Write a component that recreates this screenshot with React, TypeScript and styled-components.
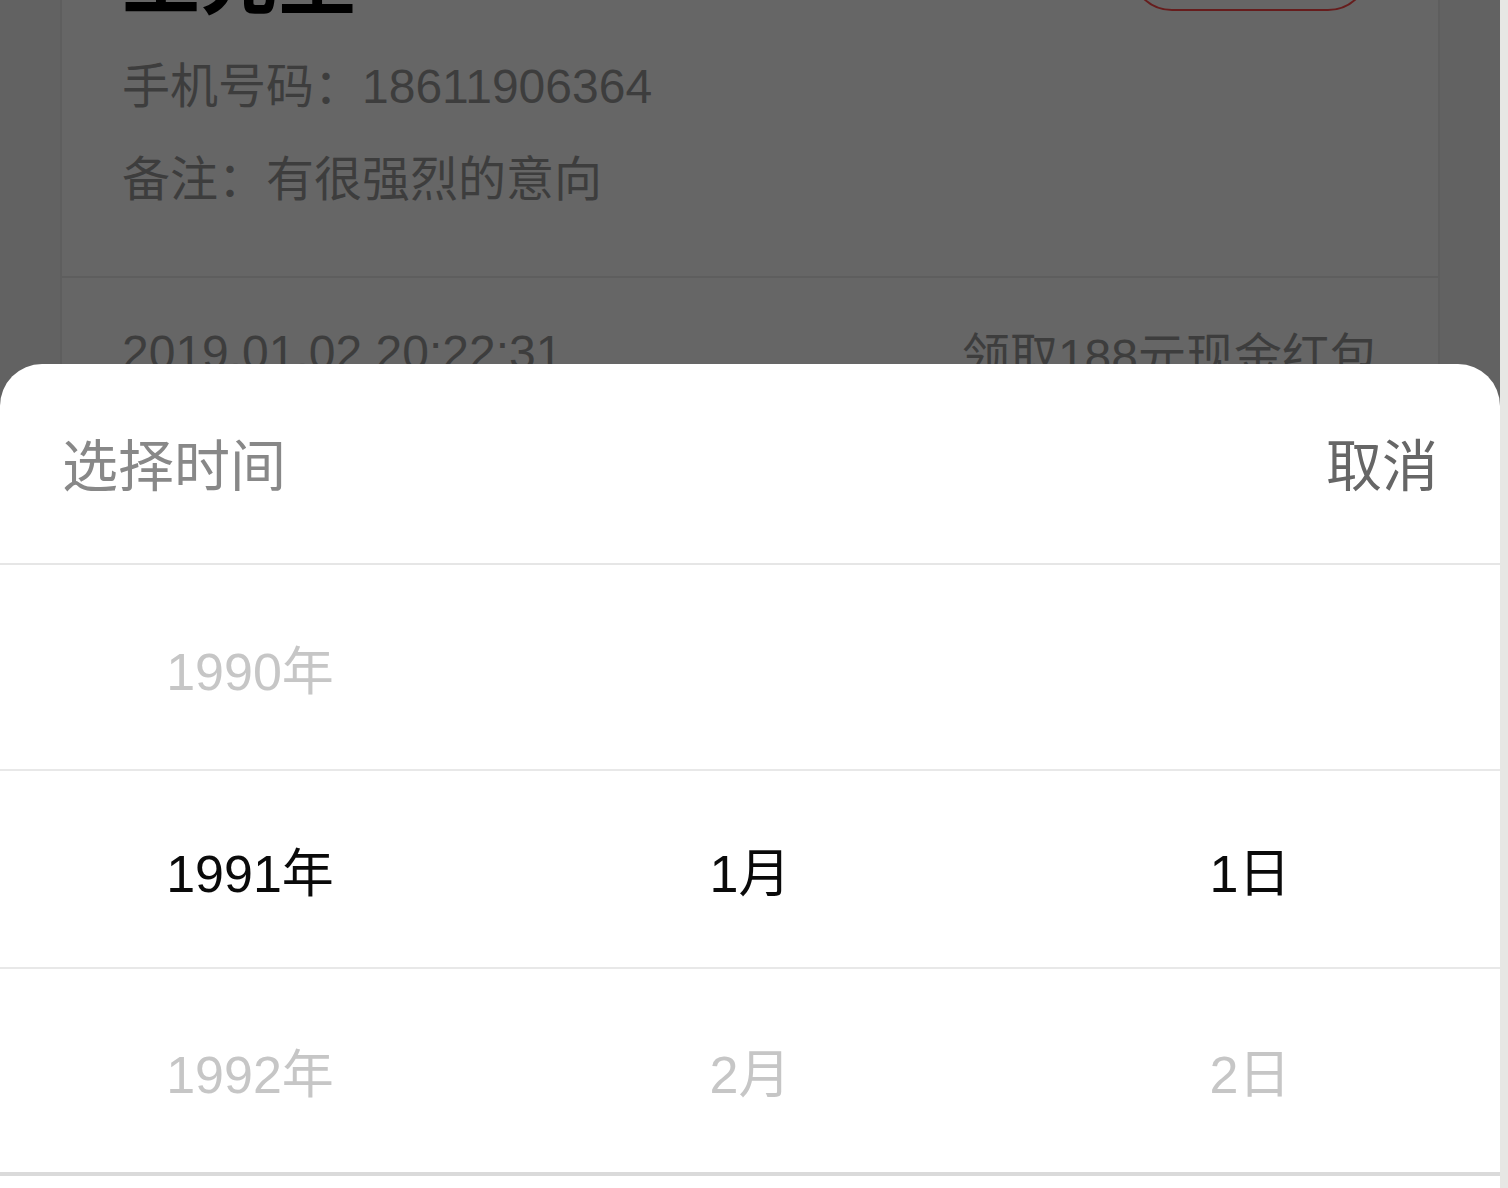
import React from "react";
import styled, { createGlobalStyle } from "styled-components";

const Global = createGlobalStyle`
  html, body {
    margin: 0;
    padding: 0;
    background: #e7e7e4;
    overflow: hidden;
  }
  * { box-sizing: border-box; }
`;

const FONT = `"Liberation Sans", "Noto Sans CJK SC", sans-serif`;

const Screen = styled.div`
  position: relative;
  width: 1500px;
  height: 1188px;
  overflow: hidden;
  background: #f6f6f6;
  font-family: ${FONT};
`;

const Card = styled.section`
  margin: -66px 60px 0;
  background: #ffffff;
  border-left: 2px solid #ececec;
  border-right: 2px solid #ececec;
`;

const CardTop = styled.div`
  padding: 0 60px 50px;
  border-bottom: 2px solid #ebebeb;
`;

const NameRow = styled.div`
  height: 80px;
  display: flex;
  align-items: flex-end;
  justify-content: space-between;
  margin-bottom: 26px;
`;

const Name = styled.h2`
  margin: 0;
  font-size: 78px;
  line-height: 78px;
  font-weight: 700;
  color: #000;
  transform: translateY(6px);
`;

const OutlineButton = styled.button`
  width: 240px;
  height: 84px;
  margin-right: 8px;
  margin-bottom: 3px;
  border: 2px solid #ff4a4a;
  border-radius: 42px;
  background: transparent;
`;

const InfoLine = styled.p`
  margin: 0;
  font-size: 48px;
  line-height: 93px;
  color: #9a9a9a;
`;

const RecordRow = styled.div`
  height: 148px;
  padding: 0 60px;
  display: flex;
  align-items: center;
  justify-content: space-between;
  font-size: 48px;
  color: #9a9a9a;
`;

const Mask = styled.div`
  position: absolute;
  inset: 0;
  background: rgba(0, 0, 0, 0.6);
`;

const Sheet = styled.div`
  position: absolute;
  left: 0;
  right: 0;
  top: 364px;
  bottom: 0;
  background: #ffffff;
  border-radius: 42px 42px 0 0;
  overflow: hidden;
`;

const SheetHeader = styled.header`
  height: 201px;
  padding: 0 62px;
  display: flex;
  align-items: center;
  justify-content: space-between;
  border-bottom: 2px solid #e6e6e6;
`;

const HeaderText = styled.span<{ $tone: string }>`
  font-size: 56px;
  color: ${(p) => p.$tone};
  transform: translateY(-2px);
`;

const PickerRow = styled.div<{ $h: number; $last?: boolean }>`
  height: ${(p) => p.$h}px;
  display: grid;
  grid-template-columns: repeat(3, 1fr);
  align-items: center;
  border-bottom: ${(p) => (p.$last ? "4px solid #dadada" : "2px solid #e8e8e8")};
`;

const Cell = styled.div<{ $active: boolean }>`
  text-align: center;
  font-size: 52px;
  color: ${(p) => (p.$active ? "#0a0a0a" : "#c6c6c6")};
`;

const rows = [
  { year: "1990年", month: "", day: "", active: false, h: 206 },
  { year: "1991年", month: "1月", day: "1日", active: true, h: 198 },
  { year: "1992年", month: "2月", day: "2日", active: false, h: 207 },
];

export default function App() {
  return (
    <>
      <Global />
      <Screen>
        <Card>
          <CardTop>
            <NameRow>
              <Name>王先生</Name>
              <OutlineButton aria-label="操作" />
            </NameRow>
            <InfoLine>手机号码：18611906364</InfoLine>
            <InfoLine>备注：有很强烈的意向</InfoLine>
          </CardTop>
          <RecordRow>
            <span>2019.01.02 20:22:31</span>
            <span>领取188元现金红包</span>
          </RecordRow>
        </Card>
        <Mask />
        <Sheet>
          <SheetHeader>
            <HeaderText $tone="#888888">选择时间</HeaderText>
            <HeaderText $tone="#666666">取消</HeaderText>
          </SheetHeader>
          {rows.map((r, i) => (
            <PickerRow key={r.year} $h={r.h} $last={i === rows.length - 1}>
              <Cell $active={r.active}>{r.year}</Cell>
              <Cell $active={r.active}>{r.month}</Cell>
              <Cell $active={r.active}>{r.day}</Cell>
            </PickerRow>
          ))}
        </Sheet>
      </Screen>
    </>
  );
}
